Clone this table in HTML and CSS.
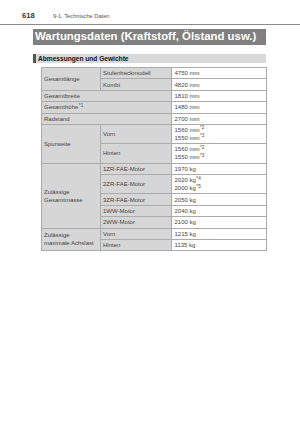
FILE: index.html
```html
<!DOCTYPE html>
<html lang="de">
<head>
<meta charset="utf-8">
<link rel="stylesheet" href="styles.css">
</head>
<body>
<div class="header">
  <span class="pageno">618</span>
  <span class="chapter">9-1. Technische Daten</span>
</div>
<div class="content">
  <div class="banner">Wartungsdaten (Kraftstoff, Ölstand usw.)</div>
  <div class="sub">Abmessungen und Gewichte</div>
  <table class="spec">
    <colgroup><col class="c1"><col class="c2"><col class="c3"></colgroup>
    <tr><td class="lab" rowspan="2">Gesamtlänge</td><td class="lab">Stufenheckmodell</td><td>4750 mm</td></tr>
    <tr><td class="lab">Kombi</td><td>4820 mm</td></tr>
    <tr><td class="lab" colspan="2">Gesamtbreite</td><td>1810 mm</td></tr>
    <tr><td class="lab" colspan="2">Gesamthöhe<sup class="n">*1</sup></td><td>1480 mm</td></tr>
    <tr><td class="lab" colspan="2">Radstand</td><td>2700 mm</td></tr>
    <tr><td class="lab" rowspan="2">Spurweite</td><td class="lab">Vorn</td><td>1560 mm<sup class="n">*2</sup><br>1550 mm<sup class="n">*3</sup></td></tr>
    <tr><td class="lab">Hinten</td><td>1560 mm<sup class="n">*2</sup><br>1550 mm<sup class="n">*3</sup></td></tr>
    <tr><td class="lab" rowspan="5">Zulässige<br>Gesamtmasse</td><td class="lab">1ZR-FAE-Motor</td><td>1970 kg</td></tr>
    <tr><td class="lab">2ZR-FAE-Motor</td><td>2020 kg<sup class="n">*4</sup><br>2000 kg<sup class="n">*5</sup></td></tr>
    <tr><td class="lab">3ZR-FAE-Motor</td><td>2050 kg</td></tr>
    <tr><td class="lab">1WW-Motor</td><td>2040 kg</td></tr>
    <tr><td class="lab">2WW-Motor</td><td>2100 kg</td></tr>
    <tr><td class="lab" rowspan="2">Zulässige<br>maximale Achslast</td><td class="lab">Vorn</td><td>1215 kg</td></tr>
    <tr><td class="lab">Hinten</td><td>1135 kg</td></tr>
  </table>
</div>
</body>
</html>
```
FILE: styles.css
```css
html, body {
  margin: 0;
  padding: 0;
  background: #ffffff;
}
body {
  font-family: "Liberation Sans", Arial, sans-serif;
  color: #444;
}
.header {
  box-sizing: border-box;
  height: 25px;
  padding: 12px 0 0 22px;
  line-height: 8px;
  border-bottom: 1px solid #8a8a8a;
  display: flex;
  align-items: baseline;
}
.pageno {
  font-weight: bold;
  font-size: 7.6px;
  color: #333;
  width: 31px;
}
.chapter {
  font-size: 5.7px;
  color: #555;
}
.content {
  margin-left: 32.5px;
  width: 233.5px;
}
.banner {
  margin-top: 4px;
  height: 15.5px;
  line-height: 15.5px;
  background: #808080;
  color: #fff;
  font-weight: bold;
  font-size: 11.4px;
  padding-left: 2.5px;
  white-space: nowrap;
}
.sub {
  margin-top: 9px;
  height: 9px;
  line-height: 9px;
  background: #d9d9d9;
  border-left: 3px solid #555;
  padding-left: 2.5px;
  font-weight: bold;
  font-size: 6.6px;
  color: #111;
}
.spec {
  margin-top: 4.5px;
  margin-left: 8px;
  width: 225.5px;
  border-collapse: collapse;
  font-size: 6px;
  color: #444;
  table-layout: fixed;
  border: 1px solid #9a9a9a;
}
.c1 { width: 59px; }
.c2 { width: 71.5px; }
.c3 { width: 95px; }
.spec td {
  border: 1px solid #ababab;
  padding: 1.2px 2.5px;
  line-height: 8px;
  vertical-align: middle;
  background: #fff;
  white-space: nowrap;
}
.spec td.lab {
  background: #d6d6d6;
}
.n {
  font-size: 4.6px;
  line-height: 0;
  vertical-align: baseline;
  position: relative;
  top: -2.6px;
  margin-left: 0.5px;
}
```
